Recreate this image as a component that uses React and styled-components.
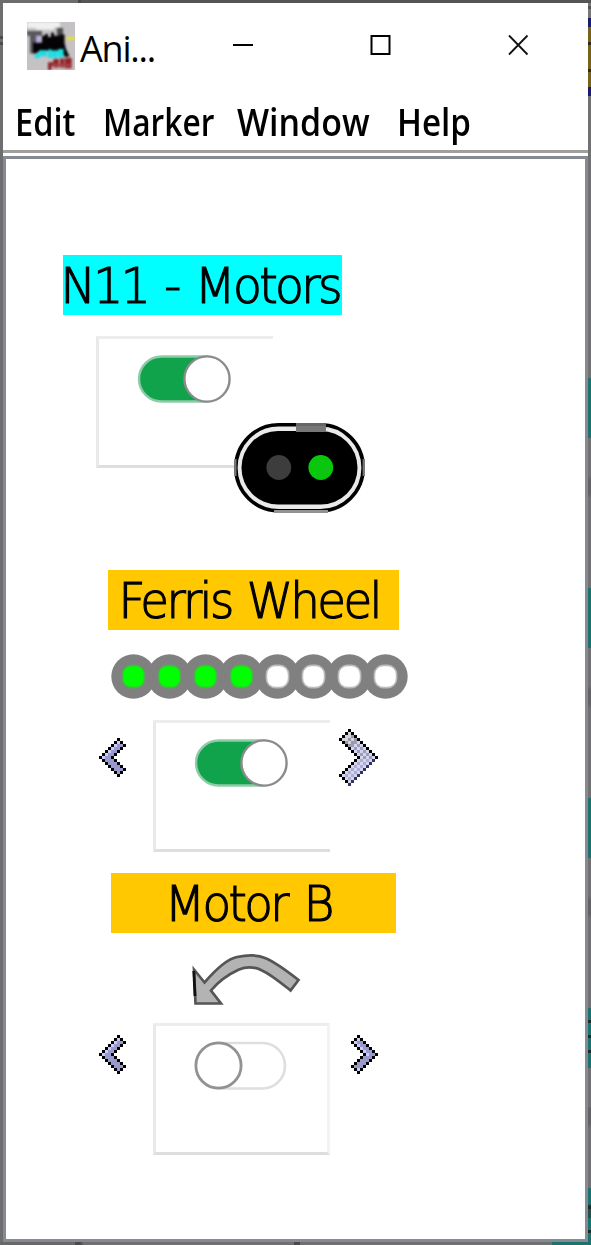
import React from "react";
import styled, { createGlobalStyle } from "styled-components";

const Global = createGlobalStyle`
  html, body { margin: 0; padding: 0; }
  body { overflow: hidden; font-family: "Open Sans", "Noto Sans", sans-serif; color: #000; }
  svg { display: block; flex: none; }
`;

const Desktop = styled.div`
  box-sizing: border-box;
  width: 591px;
  height: 1245px;
  padding: 3px;
  background:
    linear-gradient(90deg, #6c6c6c 0 78px, #484848 78px 81px, #555 81px) 0 0 / 100% 3px no-repeat,
    linear-gradient(90deg, #686868 0 75px, #4a4a4a 75px 80px, #707070 84px 294px, #4a4a4a 294px 300px, #707070 300px 552px, #1b7370 552px) 0 100% / 100% 3px no-repeat,
    linear-gradient(180deg, #6e6e6e 0 36px, #4d4d4d 36px 39px, #6e6e6e 39px 42px, #4d4d4d 42px 45px, #6e6e6e 45px) 0 0 / 3px 100% no-repeat,
    linear-gradient(180deg,
      #555 0 3px, #777 3px 6px, #555 6px 9px, #777 9px 18px, #1a1a70 18px 27px,
      #78621a 27px 42px, #2b281d 42px 45px, #78621a 45px 69px, #2b281d 69px 72px,
      #78621a 72px 87px, #1a1a70 87px 96px, #717171 96px 378px,
      #1b7370 378px 438px, #717171 438px 476px, #636363 480px 494px, #717171 498px 588px,
      #1b7370 588px 648px, #717171 648px 686px, #636363 690px 704px, #717171 708px 798px,
      #1b7370 798px 858px, #717171 858px 896px, #636363 900px 914px, #717171 918px 1008px,
      #1b7370 1008px 1020px, #1d2926 1020px 1023px, #1b7370 1023px 1035px,
      #1d2926 1035px 1038px, #1b7370 1038px 1050px, #1d2926 1050px 1053px,
      #1b7370 1053px 1068px, #717171 1068px 1107px, #636363 1108px 1124px,
      #717171 1128px 1188px, #1b7370 1188px 1204px, #1d2926 1206px 1209px,
      #24504c 1209px 1218px, #1b7370 1218px 1230px, #1d2926 1230px 1233px,
      #1b7370 1233px) 100% 0 / 3px 100% no-repeat;
`;

const Window = styled.div`
  display: flex;
  flex-direction: column;
  width: 585px;
  height: 1239px;
  background: #fff;
`;

const TitleBar = styled.header`
  display: flex;
  align-items: flex-start;
  height: 93px;
  padding-left: 24px;
  padding-top: 19px;
  box-sizing: border-box;
`;

const Title = styled.span`
  width: 152px;
  margin-left: 5px;
  padding-top: 2px;
  font-size: 36px;
  line-height: 50px;
  letter-spacing: -1.2px;
  white-space: nowrap;
`;

const Caption = styled.div`
  display: flex;
  gap: 115.5px;
  padding-top: 12px;
`;

const MenuBar = styled.nav`
  display: flex;
  box-sizing: border-box;
  height: 57px;
  padding-left: 12px;
  border-bottom: 3px solid #9f9f9f;
  margin-bottom: 3px;
`;

const MenuItem = styled.span`
  width: ${(p) => p.$w}px;
  height: 54px;
  font-family: "Open Sans", sans-serif;
  font-weight: 600;
  font-size: 37.5px;
  line-height: 51px;
  white-space: nowrap;
  transform: scaleX(${(p) => p.$squeeze});
  transform-origin: 0 0;
  flex: none;
`;

const Panel = styled.main`
  flex: 1;
  display: flex;
  flex-direction: column;
  align-items: flex-start;
  border: 3px solid #868a92;
  padding: 96px 0 0 57px;
`;

const Label = styled.div`
  display: flex;
  justify-content: center;
  box-sizing: border-box;
  width: ${(p) => p.$w}px;
  height: 60px;
  margin-left: ${(p) => p.$indent || 0}px;
  margin-top: ${(p) => p.$gap || 0}px;
  padding-right: ${(p) => p.$shift || 0}px;
  background: ${(p) => p.$bg};
`;

const LabelText = styled.span`
  font-family: "DejaVu Sans Light", "DejaVu Sans", sans-serif;
  font-weight: 200;
  font-size: 49.5px;
  line-height: 63px;
  letter-spacing: -2.8px;
  word-spacing: ${(p) => p.$word || 0}px;
  margin-right: -2.8px;
  white-space: pre;
  flex: none;
  transform: scaleX(${(p) => p.$squeeze});
  -webkit-text-stroke: 1.2px #000;
`;

const SwitchCard = styled.div`
  position: relative;
  box-sizing: border-box;
  width: 177px;
  height: 132px;
  padding: 14px 0 0 37px;
  border: 3px solid #e9e9ea;
  border-top-color: #ededed;
  border-right: ${(p) => (p.$open ? "none" : "3px solid #f3f3f3")};
  border-bottom-color: #dedede;
`;

const FirstSwitch = styled.div`
  margin: 21px 0 0 33px;
`;

const SignalHead = styled.div`
  position: absolute;
  left: 135px;
  top: 84px;
`;

const Lamps = styled.div`
  margin: 24px 0 0 48px;
`;

const ThrottleRow = styled.div`
  display: flex;
  height: 132px;
  margin-left: 36px;
  margin-top: ${(p) => p.$gap || 0}px;
`;

const ArrowSlot = styled.div`
  padding-top: ${(p) => p.$top}px;
  width: ${(p) => p.$w}px;
`;

const BackSlot = styled(ArrowSlot)`
  margin-right: 27px;
`;

const ForwardSlot = styled(ArrowSlot)`
  margin-left: ${(p) => 48 - p.$w}px;
`;

const Turn = styled.div`
  margin: 21px 0 12px 126px;
`;

function AppIcon() {
  return (
    <svg width="48" height="48" viewBox="0 0 16 16">
      <defs>
        <filter id="soft" x="-10%" y="-10%" width="120%" height="120%" colorInterpolationFilters="sRGB">
          <feGaussianBlur stdDeviation="0.35" />
        </filter>
      </defs>
      <rect width="16" height="16" fill="#c5c2c5" />
      <g filter="url(#soft)">
        <path d="M0 0H11V1.8H9V2.6H3V2H0z" fill="#f0f0f0" />
        <path d="M0 3H5V4.6H3V10.5H1V4.6H0z" fill="#59565c" />
        <path d="M10 2h2v3.6h-2z" fill="#4c4950" />
        <path d="M2 6.8H5V4.6H6V4H7V5H8V3.6H9V4.6H11V4.2H12.5V7L13 9L14.2 11.6H12.6L11.5 9.6H4.5L3 10.4H2z" fill="#050305" />
        <rect x="3" y="5" width="1.3" height="1.9" fill="#a9a9ea" />
        <rect x="13" y="5" width="3" height="1" fill="#e3e040" />
        <path d="M2.6 10.6H4.2V12H2.6zM4 9.4H6.6V11.4H4zM7 9.2H8.3V12H7zM8.4 9.5H10.2V12H8.4zM10.4 9H12.2V11.8H10.4z" fill="#18dfe4" />
        <path d="M7 13.4H8.8V14.6H8.2V16H7zM8.8 12.3H10.6V15.2H8.8zM11 12.2H12.4V15.2H11zM12.6 12H14.9V15.4H12.6z" fill="#922226" />
        <path d="M8.5 14H14.8V14.8H8.5z" fill="#a84448" />
      </g>
    </svg>
  );
}

function CaptionIcons() {
  return (
    <Caption>
      <svg width="22" height="22"><path d="M1 11H21" stroke="#000" strokeWidth="2" /></svg>
      <svg width="22" height="22"><rect x="1.5" y="2" width="18" height="18" fill="none" stroke="#000" strokeWidth="2" /></svg>
      <svg width="22" height="22"><path d="M2 1.5L20.5 20.5M20.5 1.5L2 20.5" stroke="#111" strokeWidth="1.8" /></svg>
    </Caption>
  );
}

function ToggleGlyph({ on }) {
  return (
    <svg width="98" height="54" viewBox="0 0 98 54">
      {on ? (
        <>
          <rect x="3" y="3.5" width="89" height="45" rx="22.5" fill="#10a34c" stroke="#8ecba8" strokeWidth="2.4" />
          <circle cx="71" cy="26" r="22.6" fill="#fff" stroke="#8b8b8b" strokeWidth="2.4" />
        </>
      ) : (
        <>
          <rect x="3" y="3" width="89" height="45.5" rx="22.5" fill="#fff" stroke="#dcdedf" strokeWidth="2.6" />
          <circle cx="25.5" cy="25.5" r="22.6" fill="#fff" stroke="#929292" strokeWidth="2.8" />
        </>
      )}
    </svg>
  );
}

function Signal() {
  return (
    <svg width="132" height="90" viewBox="0 0 132 90">
      <rect x="1.8" y="1.8" width="127.4" height="86" rx="43" fill="#e8ebe9" stroke="#000" strokeWidth="3.6" />
      <rect x="7.5" y="8" width="116" height="73.5" rx="36.5" fill="#000" />
      <path d="M62 1.5H92" stroke="#666" strokeWidth="3" />
      <path d="M62 6H92" stroke="#777" strokeWidth="6" />
      <path d="M40 88.5H94" stroke="#929292" strokeWidth="3" />
      <path d="M129.8 36v17M1.3 36v17" stroke="#777" strokeWidth="2.4" />
      <circle cx="44.8" cy="44.5" r="12.4" fill="#3d3d3d" />
      <circle cx="86.8" cy="44.5" r="12.4" fill="#07c80b" />
      <path d="M81 39h3v3h-3zM87 36h3v3h-3zM90 45h3v3h-3zM84 48h3v3h-3z" fill="#20b828" />
    </svg>
  );
}

function SpeedLamps({ lit }) {
  const slots = [...Array(8).keys()];
  return (
    <svg width="297" height="45" viewBox="0 0 297 45">
      {slots.map((i) => (
        <circle key={i} cx={22.5 + i * 36} cy="22.5" r="22.2" fill="#808080" />
      ))}
      {slots.map((i) => (
        <rect key={i} x={11.4 + i * 36} y="11.4" width="22.2" height="22.2" rx="9"
          fill={i < lit ? "#00ff00" : "#fff"} stroke={i < lit ? "#52ad52" : "#bbb"} strokeWidth="1.6" />
      ))}
    </svg>
  );
}

/* Builds the cells of a right-pointing chevron: n is the row of its vertex, t the length of its cut end. */
function chevronCells(n, t, pressed) {
  const cells = [];
  for (let y = 0; y <= 2 * n; y++) {
    const upper = y <= n;
    const r = upper ? y : 2 * n - y;
    const right = t + r;
    const left = Math.abs(r - t);
    for (let x = left; x <= right; x++) {
      let fill;
      if (x === left || x === right) {
        fill = pressed && x === right && !upper ? "#333366" : "#000";
      } else if (!pressed) {
        fill = x === left + 1 && (r < t || upper) ? "#ccccff" : "#9999cc";
      } else if (upper && x + y < 9) {
        fill = (x + y) % 2 ? "#d2d2d7" : "#9999a8";
        if (x + y < 6) fill = "#d4d4d8";
      } else {
        fill = (x + y) % 2 ? (upper ? "#9c9cb6" : "#adadcf") : "#d5d5f2";
      }
      cells.push({ x, y, fill });
    }
  }
  return cells;
}

function Chevron({ back, large }) {
  const n = large ? 9 : 6;
  const t = large ? 3 : 2;
  const cols = large ? 13 : 9;
  return (
    <svg width={cols * 3} height={(2 * n + 1) * 3} viewBox={`0 0 ${cols} ${2 * n + 1}`} shapeRendering="crispEdges">
      {chevronCells(n, t, large).map((c) => {
        let fill = c.fill;
        if (back && fill !== "#000") {
          const edge = c.y <= n && c.x === t + c.y - 1;
          fill = edge ? "#ccccff" : "#9999cc";
        }
        return <rect key={`${c.x}-${c.y}`} x={back ? cols - 1 - c.x : c.x} y={c.y} width="1" height="1" fill={fill} />;
      })}
    </svg>
  );
}

function TurnArrow() {
  return (
    <svg width="114" height="57" viewBox="0 0 114 57">
      <path
        d="M5 15.5L15.5 28.5C28 14 38 5 48 3C58 1 68 0.5 76 4C86 8 98 17 109.5 26L101.5 36.5C92 29 82 20.5 73 16.5C66 13 57 12.5 50 15.5C38 21 29 28 22 36.5L32 49.5H6.5Z"
        fill="#b3b3b3" stroke="#555" strokeWidth="2.7" />
      <path d="M4.8 17L6 42" stroke="#111" strokeWidth="2.8" />
    </svg>
  );
}

export default function App() {
  return (
    <Desktop>
      <Global />
      <Window>
        <TitleBar>
          <AppIcon />
          <Title>Ani...</Title>
          <CaptionIcons />
        </TitleBar>
        <MenuBar>
          <MenuItem $w={87.5} $squeeze={0.87}>Edit</MenuItem>
          <MenuItem $w={134} $squeeze={0.845}>Marker</MenuItem>
          <MenuItem $w={160} $squeeze={0.905}>Window</MenuItem>
          <MenuItem $w={90} $squeeze={0.885}>Help</MenuItem>
        </MenuBar>
        <Panel>
          <Label $w={279} $shift={8} $bg="#00ffff"><LabelText $squeeze={0.955} $word={4}>N11 - Motors</LabelText></Label>
          <FirstSwitch>
            <SwitchCard $open>
              <ToggleGlyph on />
              <SignalHead><Signal /></SignalHead>
            </SwitchCard>
          </FirstSwitch>
          <Label $w={291} $indent={45} $gap={102} $shift={12} $bg="#ffc800"><LabelText $squeeze={0.945} $word={3}>Ferris Wheel</LabelText></Label>
          <Lamps><SpeedLamps lit={4} /></Lamps>
          <ThrottleRow $gap={21}>
            <BackSlot $top={18} $w={27}><Chevron back /></BackSlot>
            <SwitchCard $open><ToggleGlyph on /></SwitchCard>
            <ForwardSlot $top={9} $w={39}><Chevron large /></ForwardSlot>
          </ThrottleRow>
          <Label $w={285} $indent={48} $gap={21} $shift={13} $bg="#ffc800"><LabelText $squeeze={0.945} $word={5}>Motor B</LabelText></Label>
          <Turn><TurnArrow /></Turn>
          <ThrottleRow>
            <BackSlot $top={12} $w={27}><Chevron back /></BackSlot>
            <SwitchCard><ToggleGlyph /></SwitchCard>
            <ForwardSlot $top={12} $w={27}><Chevron /></ForwardSlot>
          </ThrottleRow>
        </Panel>
      </Window>
    </Desktop>
  );
}
